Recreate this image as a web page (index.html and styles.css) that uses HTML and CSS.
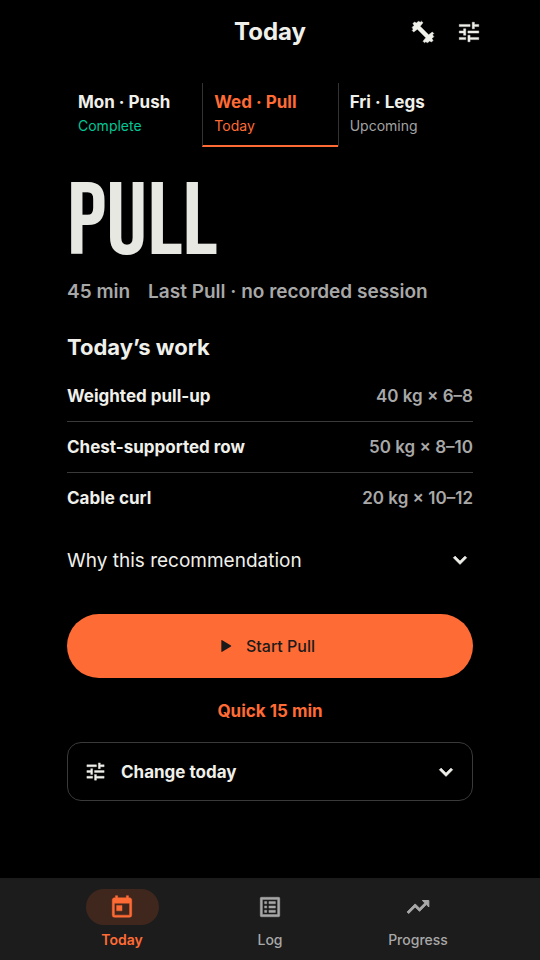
FILE: index.html
```html
<!DOCTYPE html>
<html lang="en">
<head>
<meta charset="utf-8">
<meta name="viewport" content="width=device-width, initial-scale=1">
<title>Today</title>
<link rel="stylesheet" href="styles.css">
</head>
<body>
<svg class="defs" aria-hidden="true">
  <symbol id="tune" viewBox="0 0 24 24"><path d="M3 17v2h6v-2H3zM3 5v2h10V5H3zm10 16v-2h8v-2h-8v-2h-2v6h2zM7 9v2H3v2h4v2h2V9H7zm14 4v-2H11v2h10zm-6-4h2V7h4V5h-4V3h-2v6z"/></symbol>
  <symbol id="chevron" viewBox="0 0 24 24"><path d="M7.41 8.59 12 13.17l4.59-4.58L18 10l-6 6-6-6z"/></symbol>
</svg>
<header class="top">
  <span></span>
  <h1 class="top-title">Today</h1>
  <div class="top-actions">
    <button class="icon-button" type="button" aria-label="Exercises"><svg class="icon bold" viewBox="0 0 24 24"><path d="M20.800 14.600 22 13.400 20.600 12 17.200 14.600 9.400 6.800 12 3.430 10.57 2 9.500 2.900 7.710 2 5.900 3.800 4.140 2.710 2.710 4.140 3.800 5.900 2 7.710 2.900 9.500 2 10.57 3.430 12 6.800 9.400 14.600 17.200 12 20.570 13.43 22 14.500 21.100 16.290 22 18.100 20.200 19.860 21.290 21.290 19.860 20.200 18.100 22 16.290z"/></svg></button>
    <button class="icon-button" type="button" aria-label="Settings"><svg class="icon bold"><use href="#tune"/></svg></button>
  </div>
</header>
<main class="content">
  <div class="days">
    <button class="day" type="button"><span class="day-name">Mon · Push</span><span class="day-state done">Complete</span></button>
    <button class="day current" type="button"><span class="day-name">Wed · Pull</span><span class="day-state">Today</span></button>
    <button class="day" type="button"><span class="day-name">Fri · Legs</span><span class="day-state">Upcoming</span></button>
  </div>
  <h2 class="hero">PULL</h2>
  <p class="meta"><span>45 min</span><span>Last Pull · no recorded session</span></p>
  <h3 class="section-title">Today’s work</h3>
  <ul class="work">
    <li><span>Weighted pull-up</span><span class="load">40 kg × 6–8</span></li>
    <li><span>Chest-supported row</span><span class="load">50 kg × 8–10</span></li>
    <li><span>Cable curl</span><span class="load">20 kg × 10–12</span></li>
  </ul>
  <button class="why" type="button" aria-expanded="false"><span>Why this recommendation</span><svg class="icon heavy"><use href="#chevron"/></svg></button>
  <button class="start" type="button"><svg class="play" viewBox="0 0 24 24"><path d="M4 3v18q0 1.700 1.500.8l15-9q1.300-.8 0-1.600L5.500 2.200Q4 1.300 4 3z"/></svg><span>Start Pull</span></button>
  <button class="quick" type="button">Quick 15 min</button>
  <button class="change" type="button" aria-expanded="false"><svg class="icon small bold"><use href="#tune"/></svg><span class="change-label">Change today</span><svg class="icon heavy"><use href="#chevron"/></svg></button>
</main>
<nav class="tabs" aria-label="Main">
  <a class="tab active" href="#today" aria-current="page"><span class="pill"><svg class="icon bold" viewBox="0 0 24 24"><path d="M19 3.500h-1V1.500h-2v2H8v-2H6v2H5c-1.110 0-2 .9-2 2v14a2 2 0 0 0 2 2h14a2 2 0 0 0 2-2v-14c0-1.100-.9-2-2-2zm0 16H5V8.500h14v11zM7 10.500h5v5H7z"/></svg></span><span>Today</span></a>
  <a class="tab" href="#log"><span class="pill"><svg class="icon bold" viewBox="0 0 24 24"><path d="M19 5v14H5V5h14m1.100-2H3.900c-.5 0-.9.4-.9.9v16.200c0 .4.400.9.900.9h16.200c.4 0 .9-.5.900-.9V3.900c0-.5-.5-.9-.9-.9zM11 7h6v2h-6V7zm0 4h6v2h-6v-2zm0 4h6v2h-6v-2zM7 7h2v2H7V7zm0 4h2v2H7v-2zm0 4h2v2H7v-2z"/></svg></span><span>Log</span></a>
  <a class="tab" href="#progress"><span class="pill"><svg class="icon heavy" viewBox="0 0 24 24"><path d="m16 6 2.290 2.290-4.880 4.880-4-4L2 16.590 3.410 18l6-6 4 4 6.300-6.290L22 12V6z"/></svg></span><span>Progress</span></a>
</nav>
</body>
</html>
```
FILE: styles.css
```css
* { box-sizing: border-box; }
body {
  margin: 0;
  min-height: 100vh;
  display: flex;
  flex-direction: column;
  background: #000;
  color: #f0f0eb;
  font-family: Inter, "Liberation Sans", sans-serif;
}
h1, h2, h3, p, ul { margin: 0; padding: 0; }
button {
  margin: 0;
  padding: 0;
  border: 0;
  background: none;
  color: inherit;
  font: inherit;
  text-align: left;
  cursor: pointer;
}
.defs { display: none; }
.icon { display: block; width: 26px; height: 26px; fill: currentColor; stroke: currentColor; stroke-width: 0; flex: none; }
.icon.bold { stroke-width: 0.4px; }
.icon.heavy { stroke-width: 0.9px; }
.icon.small { width: 23px; height: 23px; }
.top {
  display: grid;
  grid-template-columns: 1fr auto 1fr;
  align-items: center;
  height: 64px;
  padding: 0 48px;
}
.top-title { font-size: 24px; line-height: 32px; font-weight: 700; }
.top-actions { display: flex; justify-content: flex-end; }
.icon-button { display: grid; place-items: center; width: 46px; height: 46px; }
.content {
  flex: 1;
  display: flex;
  flex-direction: column;
  padding: 19px 67px 24px;
}
.days { display: grid; grid-template-columns: repeat(3, 1fr); }
.day {
  display: flex;
  flex-direction: column;
  gap: 4px;
  height: 64px;
  padding: 8px 11px;
  border-bottom: 2px solid transparent;
}
.day + .day { border-left: 1px solid #333; }
.day.current { border-bottom-color: #ff6b35; color: #ff6b35; }
.day-name { font-size: 17px; line-height: 22px; font-weight: 700; }
.day-state { font-size: 14px; line-height: 18px; color: #a3a3a3; }
.day-state.done { color: #00c896; }
.current .day-state { color: inherit; }
.hero {
  margin-top: 21px;
  font-family: "Bebas Neue", "Roboto Condensed", "Liberation Sans Narrow", sans-serif;
  font-size: 102px;
  line-height: 112px;
  font-weight: 400;
  color: #e8e8e3;
}
.meta {
  display: flex;
  gap: 18px;
  font-size: 19px;
  line-height: 24px;
  font-weight: 600;
  color: #a8a8a8;
}
.section-title { margin-top: 29px; font-size: 22px; line-height: 28px; font-weight: 700; }
.work { margin-top: 9px; list-style: none; }
.work li {
  display: flex;
  justify-content: space-between;
  align-items: center;
  height: 51px;
  font-size: 17px;
  font-weight: 700;
}
.work li + li { border-top: 1px solid #3a3a3a; }
.work .load { color: #a8a8a8; font-weight: 600; }
.why {
  display: flex;
  justify-content: space-between;
  align-items: center;
  height: 54px;
  margin-top: 10px;
  font-size: 19px;
}
.start {
  display: flex;
  justify-content: center;
  align-items: center;
  gap: 13px;
  height: 64px;
  margin-top: 27px;
  padding-right: 6px;
  border-radius: 32px;
  background: #ff6b35;
  color: #1a1a1a;
  font-size: 16px;
  font-weight: 500;
}
.play { width: 14px; height: 14px; fill: currentColor; }
.quick {
  align-self: center;
  height: 40px;
  margin-top: 13px;
  color: #ff6b35;
  font-size: 17px;
  font-weight: 700;
}
.change {
  display: flex;
  align-items: center;
  gap: 14px;
  height: 59px;
  margin-top: 11px;
  padding: 0 13px 0 16px;
  border: 1px solid #3a3a3a;
  border-radius: 14px;
  font-size: 17px;
  font-weight: 700;
}
.change-label { flex: 1; }
.tabs {
  display: grid;
  grid-template-columns: repeat(3, 1fr);
  height: 82px;
  padding: 11px 48px 0;
  background: #1c1c1c;
}
.tab {
  display: flex;
  flex-direction: column;
  align-items: center;
  gap: 6px;
  color: #a8a8a8;
  font-size: 14px;
  line-height: 18px;
  font-weight: 500;
  text-decoration: none;
}
.tab.active { color: #ff6b35; font-weight: 600; }
.pill { display: grid; place-items: center; width: 73px; height: 36px; border-radius: 18px; }
.active .pill { background: #40271e; }
```
